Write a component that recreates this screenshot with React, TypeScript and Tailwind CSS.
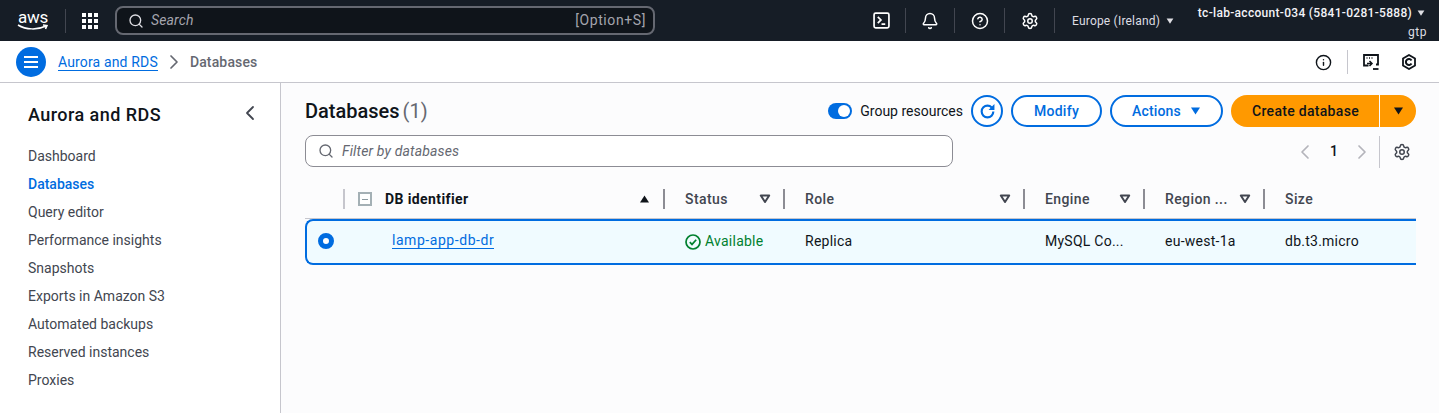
import React from "react";
import { Search, Bell, CircleHelp, Settings, ChevronRight, ChevronLeft, Info } from "lucide-react";

const font = "font-['Roboto',_'Liberation_Sans',_sans-serif]";

const sideLinks = [
  "Dashboard",
  "Databases",
  "Query editor",
  "Performance insights",
  "Snapshots",
  "Exports in Amazon S3",
  "Automated backups",
  "Reserved instances",
  "Proxies",
];

function Caret({ className }: { className: string }) {
  return (
    <svg viewBox="0 0 10 8" className={className} fill="currentColor">
      <path d="M0.5 0.5h9L5 7.5z" />
    </svg>
  );
}

function HollowCaret() {
  return (
    <svg viewBox="0 0 12 10" className="h-[10px] w-[12px] text-[#424650]" fill="none" stroke="currentColor" strokeWidth="2">
      <path d="M1.8 1.5h8.4L6 8z" strokeLinejoin="round" />
    </svg>
  );
}

function TopDivider() {
  return <div className="h-[25px] w-px bg-[#424650]" />;
}

function Grip() {
  return <div className="h-[20px] w-[2px] bg-[#8c8c94]" />;
}

function HeaderCell({ label, width }: { label: string; width: string }) {
  return (
    <div className={`flex shrink-0 items-center justify-between ${width}`}>
      <span className="pl-[20px] text-[14px] font-medium tracking-[0.4px] text-[#424650]">{label}</span>
      <div className="flex items-center gap-[12px]">
        {label !== "Size" && <HollowCaret />}
        {label !== "Size" && <Grip />}
      </div>
    </div>
  );
}

export default function App() {
  return (
    <div className={`flex h-[413px] w-[1439px] flex-col overflow-hidden bg-white text-[14px] tracking-[0.15px] text-[#0f141a] ${font}`}>
      {/* Top nav */}
      <header className="flex h-[41px] shrink-0 items-center bg-[#161d26] text-[#f3f3f7]">
        <div className="ml-[17px] flex h-[30px] w-[32px] flex-col items-center justify-center">
          <span className="text-[17px] leading-[13px] tracking-[-0.3px] text-white">aws</span>
          <svg viewBox="0 0 32 7" className="h-[7px] w-[32px]" fill="none" stroke="white" strokeWidth="1.5">
            <path d="M1 1c8 5 20 5 28 1M26 1l4 .5-1.5 3.5" />
          </svg>
        </div>
        <div className="ml-[16px] h-[24px] w-px bg-[#424650]" />
        <svg viewBox="0 0 16 16" className="ml-[16px] h-[16px] w-[16px]" fill="white">
          {[0, 6, 12].map((y) =>
            [0, 6, 12].map((x) => <rect key={`${x}-${y}`} x={x} y={y} width="4" height="4" />),
          )}
        </svg>
        <div className="ml-[17px] flex h-[29px] w-[540px] items-center rounded-[8px] border-2 border-[#656871] bg-[#0f141a] pl-[11px] pr-[7px]">
          <Search className="h-[16px] w-[16px] text-[#dedee3]" strokeWidth={2} />
          <span className="ml-[7px] text-[14px] italic text-[#a4a4ad]">Search</span>
          <span className="ml-auto text-[14px] tracking-[0.6px] text-[#a4a4ad]">[Option+S]</span>
        </div>
        <svg viewBox="0 0 16 16" className="ml-[218px] h-[17px] w-[17px]" fill="none" stroke="white" strokeWidth="1.6">
          <rect x="1" y="1" width="14" height="14" rx="1.5" />
          <path d="M4.5 4.5 7.5 7.5 4.5 10.5M8 11.5h3.5" />
        </svg>
        <div className="ml-[15px]"><TopDivider /></div>
        <Bell className="ml-[15px] h-[18px] w-[18px] text-white" strokeWidth={2} />
        <div className="ml-[15px]"><TopDivider /></div>
        <CircleHelp className="ml-[16px] h-[18px] w-[18px] text-white" strokeWidth={2} />
        <div className="ml-[15px]"><TopDivider /></div>
        <Settings className="ml-[16px] h-[18px] w-[18px] text-white" strokeWidth={2} />
        <div className="ml-[15px]"><TopDivider /></div>
        <span className="ml-[17px] text-[12px] tracking-[0.2px] text-[#dedee3]">Europe (Ireland)</span>
        <Caret className="ml-[6px] h-[6px] w-[8px] text-[#dedee3]" />
        <div className="ml-auto mr-[12px] flex flex-col items-end pt-[5px]">
          <div className="flex h-[15px] items-center pr-[2px]">
            <span className="whitespace-nowrap text-[12px] font-medium tracking-[0.3px] text-[#f3f3f7]">tc-lab-account-034 (5841-0281-5888)</span>
            <Caret className="ml-[5px] h-[6px] w-[8px] text-[#dedee3]" />
          </div>
          <span className="mt-[3px] text-[12px] leading-[17px] tracking-[0.5px] text-[#dedee3]">gtp</span>
        </div>
      </header>

      {/* Breadcrumb bar */}
      <div className="flex h-[42px] shrink-0 items-center border-b border-[#c6c6cd] bg-white pt-px">
        <button className="ml-[16px] flex h-[30px] w-[30px] flex-col items-center justify-center gap-[3px] rounded-full bg-[#006ce0]">
          <span className="h-[2px] w-[14px] bg-white" />
          <span className="h-[2px] w-[14px] bg-white" />
          <span className="h-[2px] w-[14px] bg-white" />
        </button>
        <a className="ml-[12px] border-b border-[#006ce0] leading-[16px] text-[#006ce0]">Aurora and RDS</a>
        <ChevronRight className="ml-[4px] h-[24px] w-[24px] text-[#656871]" strokeWidth={1.7} />
        <span className="ml-[4px] font-medium text-[#656871]">Databases</span>
        <div className="ml-auto flex items-center">
          <Info className="h-[17px] w-[17px] text-[#0f141a]" strokeWidth={2} />
          <div className="ml-[15px] h-[24px] w-px bg-[#c6c6cd]" />
          <svg viewBox="0 0 16 16" className="ml-[15px] h-[16px] w-[16px]" fill="none" stroke="#0f141a" strokeWidth="1.8">
            <path d="M5.5 11.5H1V1h14v9.5h-2" />
            <path d="M3.5 4h1M6 4h1M8.5 4h1" strokeWidth="1.4" />
            <path d="M4 9.5h5M6.5 7l2.5 2.5L6.5 12" strokeWidth="1.5" />
            <path d="M10 15h5.5" />
          </svg>
          <svg viewBox="0 0 16 16" className="ml-[22px] mr-[22px] h-[16px] w-[16px]" fill="none" stroke="#0f141a" strokeWidth="1.8">
            <path d="M8 1 14 4.5v7L8 15 2 11.5v-7z" />
            <path d="M10.5 6.5A3 3 0 1 0 10.5 9.5" strokeWidth="2" />
          </svg>
        </div>
      </div>

      <div className="flex min-h-0 flex-1">
        {/* Sidebar */}
        <aside className="w-[281px] shrink-0 border-r border-[#c6c6cd] bg-white">
          <div className="flex items-center justify-between pl-[28px] pr-[18px] pt-[20px]">
            <span className="text-[18px] font-medium leading-[24px] tracking-[0.45px] text-[#0f141a]">Aurora and RDS</span>
            <ChevronLeft className="mt-[-4px] h-[24px] w-[24px] text-[#424650]" strokeWidth={1.8} />
          </div>
          <nav className="mt-[15px] flex flex-col pl-[28px] tracking-normal">
            {sideLinks.map((link) => (
              <a
                key={link}
                className={
                  link === "Databases"
                    ? "h-[28px] font-medium leading-[28px] text-[#006ce0]"
                    : "h-[28px] leading-[28px] text-[#424650]"
                }
              >
                {link}
              </a>
            ))}
          </nav>
        </aside>

        {/* Content */}
        <main className="min-w-0 flex-1 bg-[#fcfcfd] pl-[24px] pr-[23px] pt-[12px]">
          <div className="flex h-[32px] items-center">
            <h1 className="text-[20px] font-medium leading-[32px] tracking-normal text-[#0f141a]">
              Databases <span className="ml-[-2px] font-normal text-[#656871]">(1)</span>
            </h1>
            <div className="ml-auto flex items-center">
              <span className="relative mr-[8px] h-[16px] w-[24px] rounded-full bg-[#006ce0]">
                <span className="absolute right-[2px] top-[2px] h-[12px] w-[12px] rounded-full bg-white" />
              </span>
              <span className="tracking-normal">Group resources</span>
              <button className="ml-[8px] flex h-[32px] w-[32px] items-center justify-center rounded-full border-2 border-[#006ce0] bg-white">
                <svg viewBox="0 0 16 16" className="h-[17px] w-[17px]" fill="none" stroke="#006ce0" strokeWidth="2">
                  <path d="M13.5 8A5.5 5.5 0 1 1 8 2.5c1.6 0 2.9.6 4 1.7" />
                  <path d="M14.5 1v5.5H9z" fill="#006ce0" stroke="none" />
                </svg>
              </button>
              <button className="ml-[8px] h-[32px] w-[91px] rounded-full border-2 border-[#006ce0] bg-white font-medium tracking-[0.3px] text-[#006ce0]">
                Modify
              </button>
              <button className="ml-[8px] flex h-[32px] w-[113px] items-center justify-center gap-[9px] rounded-full border-2 border-[#006ce0] bg-white font-medium text-[#006ce0]">
                Actions
                <Caret className="h-[8px] w-[11px]" />
              </button>
              <button className="ml-[8px] h-[32px] w-[148px] rounded-l-full bg-[#ff9900] pl-px font-medium tracking-[0.3px] text-[#0f141a]">
                Create database
              </button>
              <button className="ml-px flex h-[32px] w-[36px] items-center justify-center rounded-r-full bg-[#ff9900]">
                <Caret className="h-[8px] w-[11px] text-[#0f141a]" />
              </button>
            </div>
          </div>

          <div className="mt-[8px] flex h-[32px] items-center">
            <div className="flex h-[32px] w-[648px] items-center rounded-[8px] border border-[#8c8c94] bg-white pl-[12px]">
              <Search className="h-[16px] w-[16px] text-[#656871]" strokeWidth={2} />
              <span className="ml-[8px] pt-px italic text-[#656871]">Filter by databases</span>
            </div>
            <div className="ml-auto mr-[5px] flex items-center pt-px">
              <ChevronLeft className="h-[24px] w-[24px] text-[#b4b4bb]" strokeWidth={1.7} />
              <span className="ml-[13px] font-medium">1</span>
              <ChevronRight className="ml-[12px] h-[24px] w-[24px] text-[#b4b4bb]" strokeWidth={1.7} />
              <div className="ml-[5px] h-[32px] w-px bg-[#c6c6cd]" />
              <Settings className="ml-[13px] h-[18px] w-[18px] text-[#424650]" strokeWidth={2} />
            </div>
          </div>

          {/* Table */}
          <div className="mt-[15px] flex h-[37px] items-center border-b border-[#c6c6cd] pb-[2px]">
            <div className="flex w-[40px] shrink-0 justify-end">
              <div className="h-[20px] w-[2px] bg-[#c6c6cd]" />
            </div>
            <div className="flex w-[320px] shrink-0 items-center">
              <span className="ml-[13px] flex h-[14px] w-[14px] items-center justify-center border-2 border-[#a4b0b5] bg-white">
                <span className="h-px w-[6px] bg-[#8c9aa0]" />
              </span>
              <span className="ml-[13px] font-bold tracking-[0.4px] text-[#0f141a]">DB identifier</span>
              <Caret className="ml-auto h-[8px] w-[11px] rotate-180 text-[#0f141a]" />
              <div className="ml-[13px] h-[20px] w-[2px] bg-[#8c8c94]" />
            </div>
            <HeaderCell label="Status" width="w-[120px]" />
            <HeaderCell label="Role" width="w-[240px]" />
            <HeaderCell label="Engine" width="w-[120px]" />
            <HeaderCell label="Region ..." width="w-[120px]" />
            <HeaderCell label="Size" width="w-[152px]" />
          </div>

          <div className="flex h-[46px] items-center rounded-l-[8px] border-y-2 border-l-2 border-[#006ce0] bg-[#f0fbff] pb-px tracking-[0.25px]">
            <span className="mb-px ml-[11px] flex h-[16px] w-[16px] items-center justify-center rounded-full border-[5px] border-[#006ce0] bg-white" />
            <a className="ml-[58px] mb-[4px] w-[293px] leading-[16px]">
              <span className="border-b border-[#006ce0] tracking-[0.55px] text-[#006ce0]">lamp-app-db-dr</span>
            </a>
            <span className="flex w-[120px] items-center gap-[4px] text-[#00802f]">
              <svg viewBox="0 0 16 16" className="h-[16px] w-[16px]" fill="none" stroke="currentColor" strokeWidth="1.7">
                <circle cx="8" cy="8" r="7" />
                <path d="M4.8 8.2 7 10.4 11.2 5.8" />
              </svg>
              Available
            </span>
            <span className="w-[240px]">Replica</span>
            <span className="w-[120px]">MySQL Co...</span>
            <span className="w-[120px]">eu-west-1a</span>
            <span>db.t3.micro</span>
          </div>
        </main>
      </div>
    </div>
  );
}
